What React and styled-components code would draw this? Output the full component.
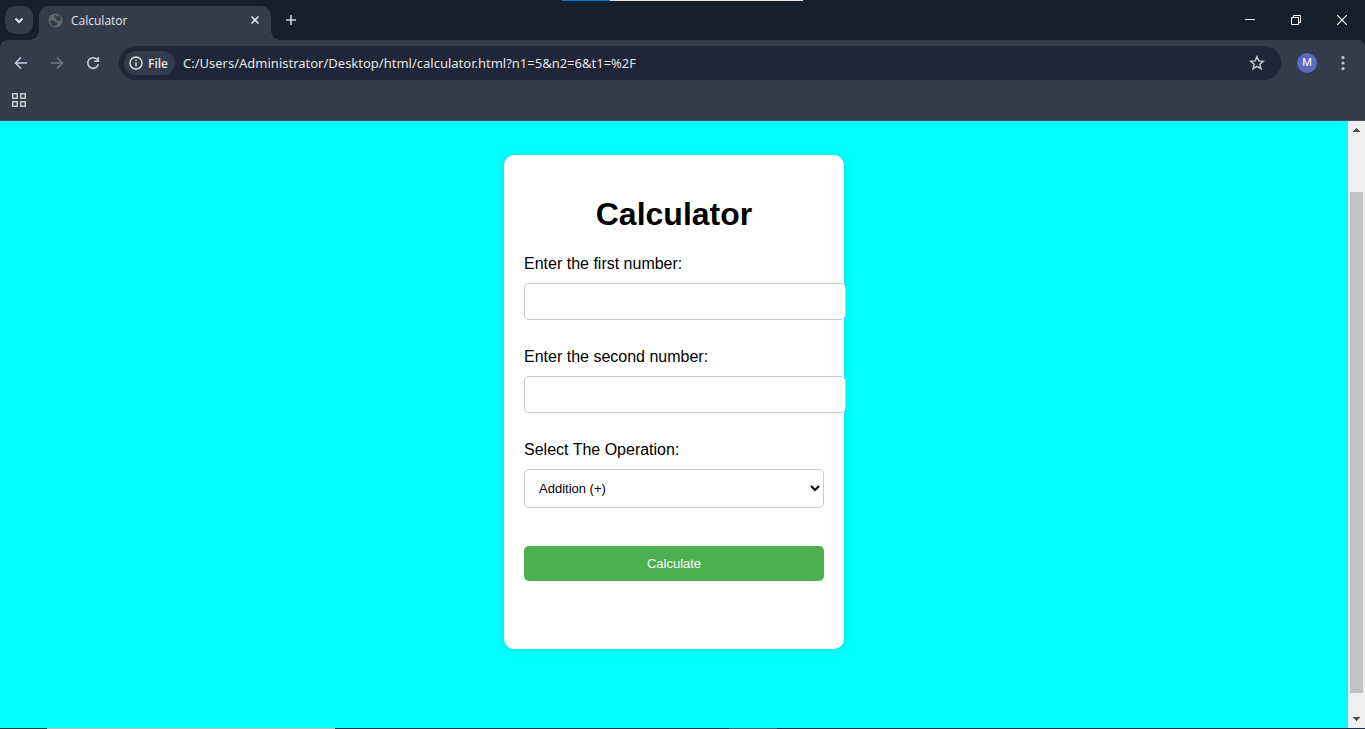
import React from "react";
import styled, { createGlobalStyle } from "styled-components";

const GlobalStyle = createGlobalStyle`
  *, *::before, *::after { box-sizing: border-box; }
  body { margin: 0; overflow: hidden; }
  button, input, select { font-family: "Liberation Sans", Arial, sans-serif; }
`;

const Window = styled.div`
  display: flex;
  flex-direction: column;
  height: 100vh;
  background: #323c4b;
  font-family: "Open Sans", "Segoe UI", sans-serif;
  color: #e3e5e8;
`;

const IconButton = styled.button`
  display: flex;
  align-items: center;
  justify-content: center;
  flex: none;
  width: ${(p) => p.$width || 28}px;
  height: ${(p) => p.$height || 28}px;
  padding: 0;
  border: 0;
  border-radius: ${(p) => p.$radius || 0}px;
  background: ${(p) => p.$fill || "transparent"};
  color: ${(p) => p.$color || "#c3cbe0"};
`;

const TabStrip = styled.header`
  position: relative;
  display: flex;
  flex: none;
  height: 40px;
  padding-left: 5px;
  background: #15202d;
`;

const TabSearch = styled.div`
  padding: 6px 6px 0 0;
`;

const Tab = styled.div`
  position: relative;
  display: flex;
  align-items: center;
  width: 232px;
  height: 34px;
  margin-top: 6px;
  padding: 0 6px 6px 9px;
  gap: 8px;
  border-radius: 10px 10px 0 0;
  background: #323c4b;
  font-size: 12px;

  &::before,
  &::after {
    content: "";
    position: absolute;
    bottom: 0;
    width: 10px;
    height: 10px;
  }
  &::before {
    right: 100%;
    background: radial-gradient(circle at 0 0, transparent 10px, #323c4b 10px);
  }
  &::after {
    left: 100%;
    background: radial-gradient(circle at 100% 0, transparent 10px, #323c4b 10px);
  }
`;

const TabTitle = styled.span`
  flex: 1;
  padding-top: 2px;
  line-height: 16px;
`;

const NewTab = styled.div`
  padding: 6px 0 0 6px;
`;

const WindowControls = styled.div`
  display: flex;
  margin-left: auto;
`;

const EdgeSliver = styled.div`
  position: absolute;
  inset: 0 0 auto 0;
  display: flex;
  justify-content: center;
  height: 1px;
`;

const Sliver = styled.span`
  width: ${(p) => p.$width}px;
  height: 1px;
  background: ${(p) => p.$color};
`;

const Chrome = styled.div`
  flex: none;
  background: #15202d;
`;

const Toolbars = styled.div`
  border-radius: 8px 8px 0 0;
  border-bottom: 1px solid #4b5058;
  background: #323c4b;
`;

const Toolbar = styled.nav`
  display: flex;
  align-items: center;
  height: 46px;
  padding: 0 8px 0 7px;
`;

const NavButtons = styled.div`
  display: flex;
  gap: 8px;
  margin-right: 12px;
`;

const AddressBar = styled.div`
  display: flex;
  align-items: center;
  flex: 1;
  height: 34px;
  padding: 0 10px 0 5px;
  border-radius: 17px;
  background: #1e2637;
`;

const FileChip = styled.button`
  display: flex;
  align-items: center;
  gap: 5px;
  height: 24px;
  width: 51px;
  padding: 0 0 0 5px;
  border: 0;
  border-radius: 12px;
  background: #323c4b;
  color: #e3e5e8;
  font: 600 12px "Open Sans", "Segoe UI", sans-serif;
`;

const Url = styled.input`
  flex: 1;
  min-width: 0;
  padding: 0 8px;
  border: 0;
  outline: 0;
  background: transparent;
  color: #e3e5e8;
  font: 13px/18px "Noto Sans", "Segoe UI", sans-serif;
`;

const Avatar = styled.button`
  width: 20px;
  height: 20px;
  margin: 0 12px 0 16px;
  padding: 0;
  border: 0;
  border-radius: 50%;
  background: #5c6bc0;
  color: #fff;
  font: 11px/20px Roboto, sans-serif;
`;

const BookmarksBar = styled.div`
  display: flex;
  height: 34px;
  padding-left: 5px;
`;

const Viewport = styled.div`
  display: flex;
  flex: 1;
  min-height: 0;
`;

const Page = styled.main`
  flex: 1;
  padding-top: 34px;
  background: #00ffff;
  color: #000;
  font-family: "Liberation Sans", Arial, sans-serif;
`;

const Card = styled.form`
  width: 340px;
  margin: 0 auto;
  padding: 20px 20px 68px;
  border-radius: 10px;
  background: #fff;
  box-shadow: 0 0 10px rgba(0, 0, 0, 0.1);
`;

const Title = styled.h1`
  margin: 20px 0 21px;
  font-size: 32px;
  line-height: 38px;
  text-align: center;
`;

const Field = styled.div`
  display: flex;
  flex-direction: column;
  gap: 9px;
  margin-bottom: 27px;
`;

const Label = styled.label`
  font-size: 16px;
  line-height: 20px;
`;

const NumberInput = styled.input`
  width: calc(100% + 22px);
  height: 37px;
  padding: 10px;
  border: 1px solid #ccc;
  border-radius: 5px;
  background: #fff;
`;

const Select = styled.select`
  width: 100%;
  height: 39px;
  padding: 10px;
  border: 1px solid #ccc;
  border-radius: 5px;
  background: #fff;
  color: #000;
  font-size: 13px;
`;

const Submit = styled.button`
  display: block;
  width: 100%;
  height: 35px;
  margin-top: 38px;
  border: 0;
  border-radius: 5px;
  background: #4caf50;
  color: #fff;
  font-size: 13px;
`;

const ScrollTrack = styled.div`
  display: flex;
  flex-direction: column;
  align-items: center;
  width: 17px;
  background: #f0f0f0;
`;

const ScrollSpace = styled.div`
  flex: ${(p) => p.$grow};
`;

const ScrollThumb = styled.div`
  flex: 501;
  width: 13px;
  background: #c1c1c1;
`;

const Taskbar = styled.footer`
  display: flex;
  flex: none;
  height: 1px;
  background: #1b2c48;
`;

const Arrow = ({ down }) => (
  <svg width="7" height="4" viewBox="0 0 7 4" fill="#505050" shapeRendering="crispEdges">
    <path d={down ? "M0 0h7v1H0zM1 1h5v1H1zM2 2h3v1H2zM3 3h1v1H3z" : "M3 0h1v1H3zM2 1h3v1H2zM1 2h5v1H1zM0 3h7v1H0z"} />
  </svg>
);

const Stroke = ({ size = 16, width = 2, children }) => (
  <svg width={size} height={size} viewBox={`0 0 ${size} ${size}`} fill="none" stroke="currentColor" strokeWidth={width}>
    {children}
  </svg>
);

export default function App() {
  return (
    <>
      <GlobalStyle />
      <Window>
        <TabStrip>
          <TabSearch>
            <IconButton aria-label="Search tabs" $radius={10} $fill="#323c4b" $color="#e3e5e8">
              <Stroke><path d="M4.5 6.5 8 10l3.500-3.500" /></Stroke>
            </IconButton>
          </TabSearch>
          <Tab>
            <svg width="15" height="15" viewBox="0 0 15 15">
              <circle cx="7.500" cy="7.500" r="7" fill="#65686d" />
              <path d="M2 7.500h3.500c1.500 0 1.800 1 1.800 2h2v1.500c0 .8-1 1-2 1v1.300C4 13.500 2 11 2 7.500zM7 1.800c-.8.400-1 1-1 2 0 1 1 1.200 2 1.200v1.500c0 .8.700 1 1.500 1h3.700c.2-2.500-1.200-4.800-3.200-5.500 0 1-.8 1.500-1.500 1.200z" fill="#323c4b" />
            </svg>
            <TabTitle>Calculator</TabTitle>
            <IconButton aria-label="Close tab" $width={20} $height={20} $color="#e3e5e8">
              <Stroke size={10} width={1.6}><path d="m1.500 1.500 7 7m0-7-7 7" /></Stroke>
            </IconButton>
          </Tab>
          <NewTab>
            <IconButton aria-label="New tab" $color="#c9d3e6">
              <Stroke size={12} width={1.6}><path d="M6 1v10M1 6h10" /></Stroke>
            </IconButton>
          </NewTab>
          <WindowControls>
            <IconButton aria-label="Minimize" $width={46} $height={40} $color="#fff">
              <Stroke size={10} width={1}><path d="M0 4.500h10" /></Stroke>
            </IconButton>
            <IconButton aria-label="Restore" $width={46} $height={40} $color="#fff">
              <Stroke size={10} width={1}><path d="M.5 2.500h7v7h-7zM2.500 2.500v-2h7v7h-2" /></Stroke>
            </IconButton>
            <IconButton aria-label="Close" $width={46} $height={40} $color="#fff">
              <Stroke size={10} width={1.2}><path d="m0 0 10 10M10 0 0 10" /></Stroke>
            </IconButton>
          </WindowControls>
          <EdgeSliver>
            <Sliver $width={48} $color="#0078d7" />
            <Sliver $width={193} $color="#e6e6e6" />
          </EdgeSliver>
        </TabStrip>

        <Chrome>
          <Toolbars>
            <Toolbar>
              <NavButtons>
                <IconButton aria-label="Back">
                  <Stroke width={1.6}><path d="M14 8H3M8 2.500 2.500 8 8 13.500" /></Stroke>
                </IconButton>
                <IconButton aria-label="Forward" $color="#6f7784">
                  <Stroke width={1.6}><path d="M2 8h11M8 2.500 13.500 8 8 13.500" /></Stroke>
                </IconButton>
                <IconButton aria-label="Reload">
                  <Stroke width={1.6}><path d="M13.300 9.200A5.300 5.300 0 1 1 12.200 4.600L13.300 5.800M13.300 2v4.200H9" /></Stroke>
                </IconButton>
              </NavButtons>
              <AddressBar>
                <FileChip>
                  <Stroke size={14} width={1.4}>
                    <circle cx="7" cy="7" r="6" />
                    <path d="M7 6.200v4M7 3.600v1.400" />
                  </Stroke>
                  File
                </FileChip>
                <Url
                  aria-label="Address"
                  readOnly
                  value="C:/Users/Administrator/Desktop/html/calculator.html?n1=5&n2=6&t1=%2F"
                />
                <IconButton aria-label="Bookmark this tab" $color="#c7c9ce">
                  <Stroke width={1.5}>
                    <path d="m8 1.800 1.800 4.100 4.500.4-3.400 3 1 4.400L8 11.400l-3.900 2.300 1-4.400-3.400-3 4.500-.4z" />
                  </Stroke>
                </IconButton>
              </AddressBar>
              <Avatar aria-label="Profile">M</Avatar>
              <IconButton aria-label="Menu">
                <svg width="16" height="16" viewBox="0 0 16 16" fill="currentColor">
                  <circle cx="8" cy="2.500" r="1.600" />
                  <circle cx="8" cy="8" r="1.600" />
                  <circle cx="8" cy="13.500" r="1.600" />
                </svg>
              </IconButton>
            </Toolbar>
            <BookmarksBar>
              <IconButton aria-label="Apps" $color="#c7c9ce">
                <Stroke size={14} width={1.5}>
                  <path d="M.75.75h4.500v4.500H.75zM8.750.75h4.500v4.500h-4.500zM.75 8.750h4.500v4.500H.75zM8.750 8.750h4.500v4.500h-4.500z" />
                </Stroke>
              </IconButton>
            </BookmarksBar>
          </Toolbars>
        </Chrome>

        <Viewport>
          <Page>
            <Card onSubmit={(e) => e.preventDefault()}>
              <Title>Calculator</Title>
              <Field>
                <Label htmlFor="n1">Enter the first number:</Label>
                <NumberInput id="n1" type="number" />
              </Field>
              <Field>
                <Label htmlFor="n2">Enter the second number:</Label>
                <NumberInput id="n2" type="number" />
              </Field>
              <Field>
                <Label htmlFor="operation">Select The Operation:</Label>
                <Select id="operation">
                  <option>Addition (+)</option>
                </Select>
              </Field>
              <Submit type="submit">Calculate</Submit>
            </Card>
          </Page>
          <ScrollTrack>
            <ScrollSpace $grow="0 0 7px" />
            <Arrow />
            <ScrollSpace $grow={60} />
            <ScrollThumb />
            <ScrollSpace $grow={24} />
            <Arrow down />
            <ScrollSpace $grow="0 0 7px" />
          </ScrollTrack>
        </Viewport>
        <Taskbar>
          <Sliver $width={47} $color="#0b4040" />
          <Sliver $width={288} $color="#b8c0be" />
          <Sliver $width={394} $color="#16324a" />
          <Sliver $width={48} $color="#44606e" />
        </Taskbar>
      </Window>
    </>
  );
}
